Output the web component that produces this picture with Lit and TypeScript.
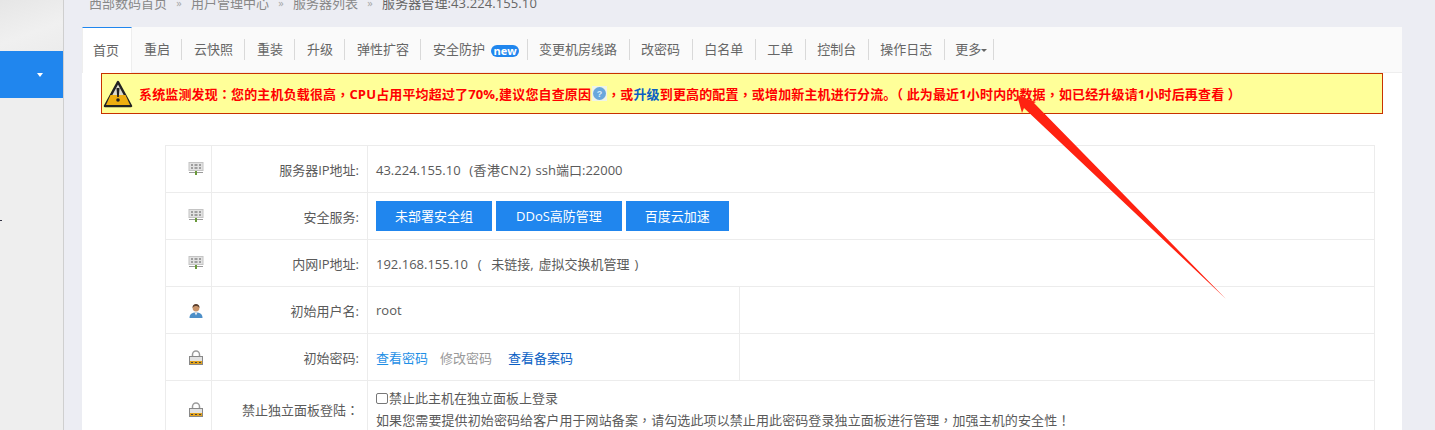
import { LitElement, html, css, svg } from "lit";
import { customElement } from "lit/decorators.js";

const serverIcon = svg`<svg class="ico" width="16" height="14" viewBox="0 0 16 14"><rect x="1" y="0.500" width="14" height="8" fill="#e2e2e2" stroke="#c4c4c4"/><path d="M3 3h2M6.500 3h3M11 3h2M3 6h2M6.500 6h3M11 6h2" stroke="#888" stroke-width="1.400"/><rect x="1" y="10" width="14" height="1" fill="#9a9a9a"/><path d="M8 9v4" stroke="#6a9a3a" stroke-width="2"/></svg>`;
const userIcon = svg`<svg class="ico" width="16" height="15" viewBox="0 0 16 15"><path d="M1.500 15c0-4 2.500-5.500 6.500-5.500s6.500 1.500 6.500 5.500z" fill="#4d8fc8"/><path d="M6.500 9.500h3l-1.500 3z" fill="#eee"/><circle cx="8" cy="5" r="3.400" fill="#c9946a"/><path d="M4.500 5c0-3 1.500-4 3.500-4s3.500 1 3.500 4c-1-1.500-2-2-3.500-2s-2.500.5-3.500 2z" fill="#5a4030"/></svg>`;
const lockIcon = svg`<svg class="ico" width="16" height="15" viewBox="0 0 16 15"><path d="M4.500 7V4.500a3.500 3.500 0 0 1 7 0V7" fill="none" stroke="#9c9c9c" stroke-width="1.500"/><rect x="1.500" y="6.500" width="13" height="8" fill="#e2e2e2" stroke="#888"/><rect x="2" y="11" width="12" height="3" fill="#e3a21a"/><path d="M3 12.500h2M7 12.500h2M11 12.500h2" stroke="#444"/></svg>`;

const p = (text: string) =>
  text.split(/([，：！])/).map((s, i) => (i % 2 ? html`<span class="tc">${s}</span>` : s));

@customElement("app-root")
export class AppRoot extends LitElement {
  static styles = css`
    :host { display: block; width: 1435px; height: 430px; overflow: hidden; position: relative; background: #ecedf3;
      font-family: "Open Sans", "Noto Sans CJK SC", sans-serif; font-size: 13px; color: #5a5a5a; }
    .tc { font-family: "Noto Sans CJK TC", sans-serif; }
    .page { display: flex; height: 430px; }
    .side { width: 63px; flex: none; background: #eeeeee; border-right: 1px solid #cfcfcf; display: flex; flex-direction: column; }
    .side-top { height: 51px; background: linear-gradient(160deg, #e6e6e6, #f0f0f0 60%, #ececec); }
    .side-blue { height: 47px; background: #2086ee; display: flex; justify-content: flex-end; align-items: center; padding-right: 20px; box-sizing: border-box; }
    .caret { width: 0; height: 0; border: 3.500px solid transparent; border-top: 4px solid #fff; border-bottom: 0; }
    .side-mark { width: 2px; height: 1px; background: #334; margin-top: 122px; }
    .main { flex: 1; padding-left: 18px; min-width: 0; }
    .crumbs { height: 27px; line-height: 6px; display: flex; gap: 9px; padding-left: 7px; color: #888; white-space: nowrap; }
    .crumbs .sep { color: #a8a8a8; font-size: 11px; width: 6px; text-align: center; }
    .crumbs .cur { color: #666; letter-spacing: 0.1px; }
    .panel { width: 1320px; background: #fff; height: 403px; overflow: hidden; }
    .tabs { height: 45px; background: #fafafa; border-bottom: 1px solid #eee; display: flex; align-items: center; white-space: nowrap; }
    .tab { height: 21px; line-height: 21px; padding: 0 11px 0 12px; border-right: 1px solid #d9d9d9; color: #666; }
    .tab.active { height: 46px; line-height: 44px; box-sizing: border-box; padding: 0 10px; width: 50px; background: #fff; border: 1px solid #eee; border-top: 1px solid #2086ee; border-bottom: 0; align-self: flex-start; }
    .tab.sec { padding-right: 8px; }
    .tab.late { padding: 0 12px 0 11px; }
    .tab.more { padding: 0 6px 0 10px; }
    .new { display: inline-block; box-sizing: border-box; width: 28px; text-align: center; background: #2086ee; color: #fff; border-radius: 7px; font-size: 11px; font-weight: 700; line-height: 12px; margin-left: 6px; vertical-align: -1px; }
    .more-caret { display: inline-block; width: 0; height: 0; border: 3.500px solid transparent; border-top: 3px solid #666; border-bottom: 0; vertical-align: middle; }
    .alert { width: 1282px; height: 41px; margin-left: 19px; box-sizing: border-box; background: #ffff99; border: 1px solid #c83200; display: flex; align-items: center; padding-left: 1px; color: #f00; font-weight: 700; white-space: nowrap; letter-spacing: 0.15px; }
    .warn { flex: none; margin-right: 6px; }
    .help { flex: none; margin-left: 1px; }
    .up { color: #0a5fc4; }
    table { border-collapse: collapse; width: 1210px; margin: 31px 0 0 83px; table-layout: fixed; }
    td { border: 1px solid #ececec; box-sizing: border-box; padding: 0; }
    tr { height: 47px; }
    tr.tall { height: 58px; }
    td.i { padding-right: 7px; }
    td.l { text-align: right; padding-right: 8px; }
    td.v { padding-left: 8px; }
    .ico { display: block; margin-left: auto; }
    .ws1 { word-spacing: 1px; }
    .ws2 { word-spacing: 1.500px; }
    .wide { letter-spacing: 0.4px; }
    .btn { display: inline-block; background: #2086ee; color: #fff; height: 30px; line-height: 30px; padding: 0 19px; margin-right: 4px; vertical-align: middle; }
    .btn.d { padding: 0 20px; }
    .link { color: #1e8fe6; }
    .gray { color: #999; margin-left: 12px; }
    .blue2 { color: #0a5fc4; margin-left: 16px; }
    .check { display: inline-block; width: 10px; height: 9px; border: 1px solid #777; border-radius: 2px; vertical-align: -1px; margin-right: 1px; }
    .two { line-height: 22px; padding-bottom: 2px; }
    .long { letter-spacing: 0.1px; }
    .arrow { position: absolute; left: 0; top: 0; pointer-events: none; }
  `;

  render() {
    const tabs = ["重启", "云快照", "重装", "升级", "弹性扩容"];
    const tabs2 = ["变更机房线路", "改密码", "白名单", "工单", "控制台", "操作日志"];
    return html`
      <div class="page">
        <aside class="side">
          <div class="side-top"></div>
          <div class="side-blue"><span class="caret"></span></div>
          <div class="side-mark"></div>
        </aside>
        <main class="main">
          <div class="crumbs">
            <span>西部数码首页</span><span class="sep">»</span><span>用户管理中心</span><span class="sep">»</span><span>服务器列表</span><span class="sep">»</span><span class="cur">服务器管理:43.224.155.10</span>
          </div>
          <div class="panel">
            <nav class="tabs">
              <div class="tab active">首页</div>
              ${tabs.map((t) => html`<div class="tab">${t}</div>`)}
              <div class="tab sec">安全防护<span class="new">new</span></div>
              ${tabs2.map((t) => html`<div class="tab late">${t}</div>`)}
              <div class="tab more">更多<span class="more-caret"></span></div>
            </nav>
            <div class="alert">
              <svg class="warn" width="30" height="30" viewBox="0 0 30 30">
                <path d="M15 3 L28 27 H2 Z" fill="#dcdcd0" stroke="#222" stroke-width="2.500" stroke-linejoin="round"/>
                <path d="M7.500 16 H22.500 L27 26 H3 Z" fill="#eeae10"/>
                <path d="M13.500 9h3l-.7 9h-1.600z" fill="#222"/><circle cx="15" cy="21" r="1.800" fill="#222"/>
              </svg>
              <span>${p("系统监测发现：您的主机负载很高，CPU占用平均超过了70%,建议您自查原因")}</span>
              <svg class="help" width="15" height="15" viewBox="0 0 15 15"><rect width="15" height="15" fill="#eef4e8"/><circle cx="7.500" cy="7.500" r="6.500" fill="#69a7dc"/><text x="7.500" y="11" text-anchor="middle" font-size="9" fill="#d8ecfa" font-family="Liberation Sans">?</text></svg>
              <span>${p("，或")}<span class="up">升级</span>${p("到更高的配置，或增加新主机进行分流。（ 此为最近1小时内的数据，如已经升级请1小时后再查看 ）")}</span>
            </div>
            <table>
              <colgroup><col style="width:46px"><col style="width:156px"><col style="width:372px"><col></colgroup>
              <tr><td class="i">${serverIcon}</td><td class="l">服务器IP地址:</td><td class="v ws1" colspan="2">43.224.155.10 &nbsp;<span class="wide">(香港CN2)</span> ssh端口:22000</td></tr>
              <tr><td class="i">${serverIcon}</td><td class="l">安全服务:</td><td class="v" colspan="2"><span class="btn">未部署安全组</span><span class="btn d">DDoS高防管理</span><span class="btn">百度云加速</span></td></tr>
              <tr><td class="i">${serverIcon}</td><td class="l">内网IP地址:</td><td class="v ws2" colspan="2">192.168.155.10 &nbsp;( &nbsp;未链接, 虚拟交换机管理 )</td></tr>
              <tr><td class="i">${userIcon}</td><td class="l">初始用户名:</td><td class="v">root</td><td></td></tr>
              <tr><td class="i">${lockIcon}</td><td class="l">初始密码:</td><td class="v"><span class="link">查看密码</span><span class="gray">修改密码</span><span class="blue2">查看备案码</span></td><td></td></tr>
              <tr class="tall"><td class="i">${lockIcon}</td><td class="l">${p("禁止独立面板登陆：")}</td><td class="v two" colspan="2"><span class="check"></span>禁止此主机在独立面板上登录<br><span class="long">${p("如果您需要提供初始密码给客户用于网站备案，请勾选此项以禁止用此密码登录独立面板进行管理，加强主机的安全性！")}</span></td></tr>
            </table>
          </div>
        </main>
      </div>
      <svg class="arrow" width="1435" height="430" viewBox="0 0 1435 430">
        <path d="M1017 95 L1036 102 L1034 103 L1226 299 L1024 108 L1022 113 Z" fill="#ff2211"/>
      </svg>
    `;
  }
}
